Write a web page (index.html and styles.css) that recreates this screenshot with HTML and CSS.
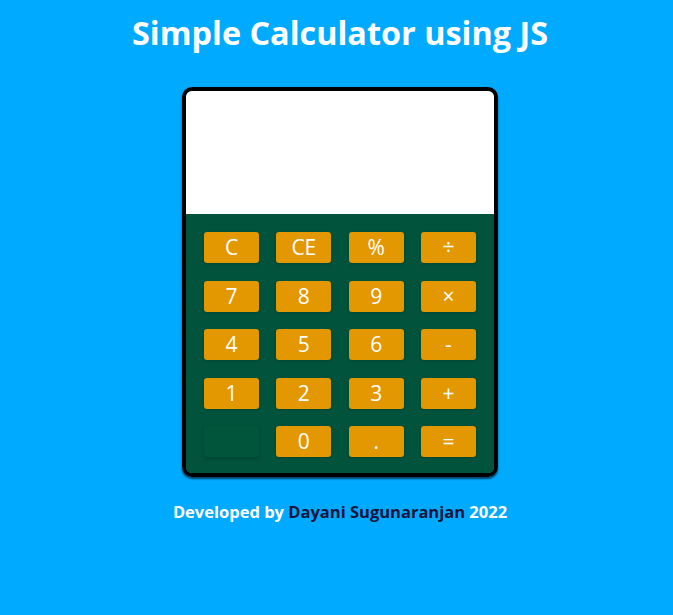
FILE: index.html
```html
<!DOCTYPE html>
<html>
<head>
<meta charset="utf-8">
<link rel="stylesheet" href="styles.css">
</head>
<body>
<h1 class="title">Simple Calculator using JS</h1>
<div class="calc">
  <div class="display"></div>
  <div class="keys">
    <button class="key">C</button>
    <button class="key">CE</button>
    <button class="key">%</button>
    <button class="key">÷</button>
    <button class="key">7</button>
    <button class="key">8</button>
    <button class="key">9</button>
    <button class="key">×</button>
    <button class="key">4</button>
    <button class="key">5</button>
    <button class="key">6</button>
    <button class="key">-</button>
    <button class="key">1</button>
    <button class="key">2</button>
    <button class="key">3</button>
    <button class="key">+</button>
    <button class="key key-blank"></button>
    <button class="key">0</button>
    <button class="key">.</button>
    <button class="key">=</button>
  </div>
</div>
<p class="footer">Developed by <span class="name">Dayani Sugunaranjan</span> 2022</p>
</body>
</html>
```
FILE: styles.css
```css
html, body {
  margin: 0;
  padding: 0;
}
body {
  background: #00aaff;
  font-family: "Open Sans", "Noto Sans", sans-serif;
  color: #ffffff;
  display: flex;
  flex-direction: column;
  align-items: center;
  min-height: 615px;
  padding-left: 7px;
  box-sizing: border-box;
}
.title {
  margin: 12px 0 0;
  font-size: 32.4px;
  font-weight: 700;
  line-height: 40px;
  letter-spacing: 0;
}
.calc {
  margin-top: 35px;
  width: 308px;
  border: 4px solid #000;
  border-radius: 10px;
  overflow: hidden;
  box-shadow: 0 2px 2px rgba(0,0,0,0.6);
}
.display {
  height: 123px;
  background: #fff;
}
.keys {
  background: #01533b;
  padding: 18px 18px 16px;
  display: grid;
  grid-template-columns: repeat(4, 55px);
  column-gap: 17.33px;
  row-gap: 17.5px;
}
.key {
  height: 31px;
  border: none;
  border-radius: 3px;
  background: #e39700;
  color: #fff;
  font-family: "Open Sans", "Noto Sans", sans-serif;
  font-size: 21px;
  line-height: 31px;
  padding: 0;
  box-shadow: 0 1px 3px rgba(0,0,0,0.18);
}
.key-blank {
  background: #01553b;
  box-shadow: 0 2px 4px rgba(0,0,0,0.2);
}
.footer {
  margin: 24px 0 0;
  font-size: 16.5px;
  font-weight: 700;
  line-height: 22px;
}
.name {
  color: #14143c;
}
```
